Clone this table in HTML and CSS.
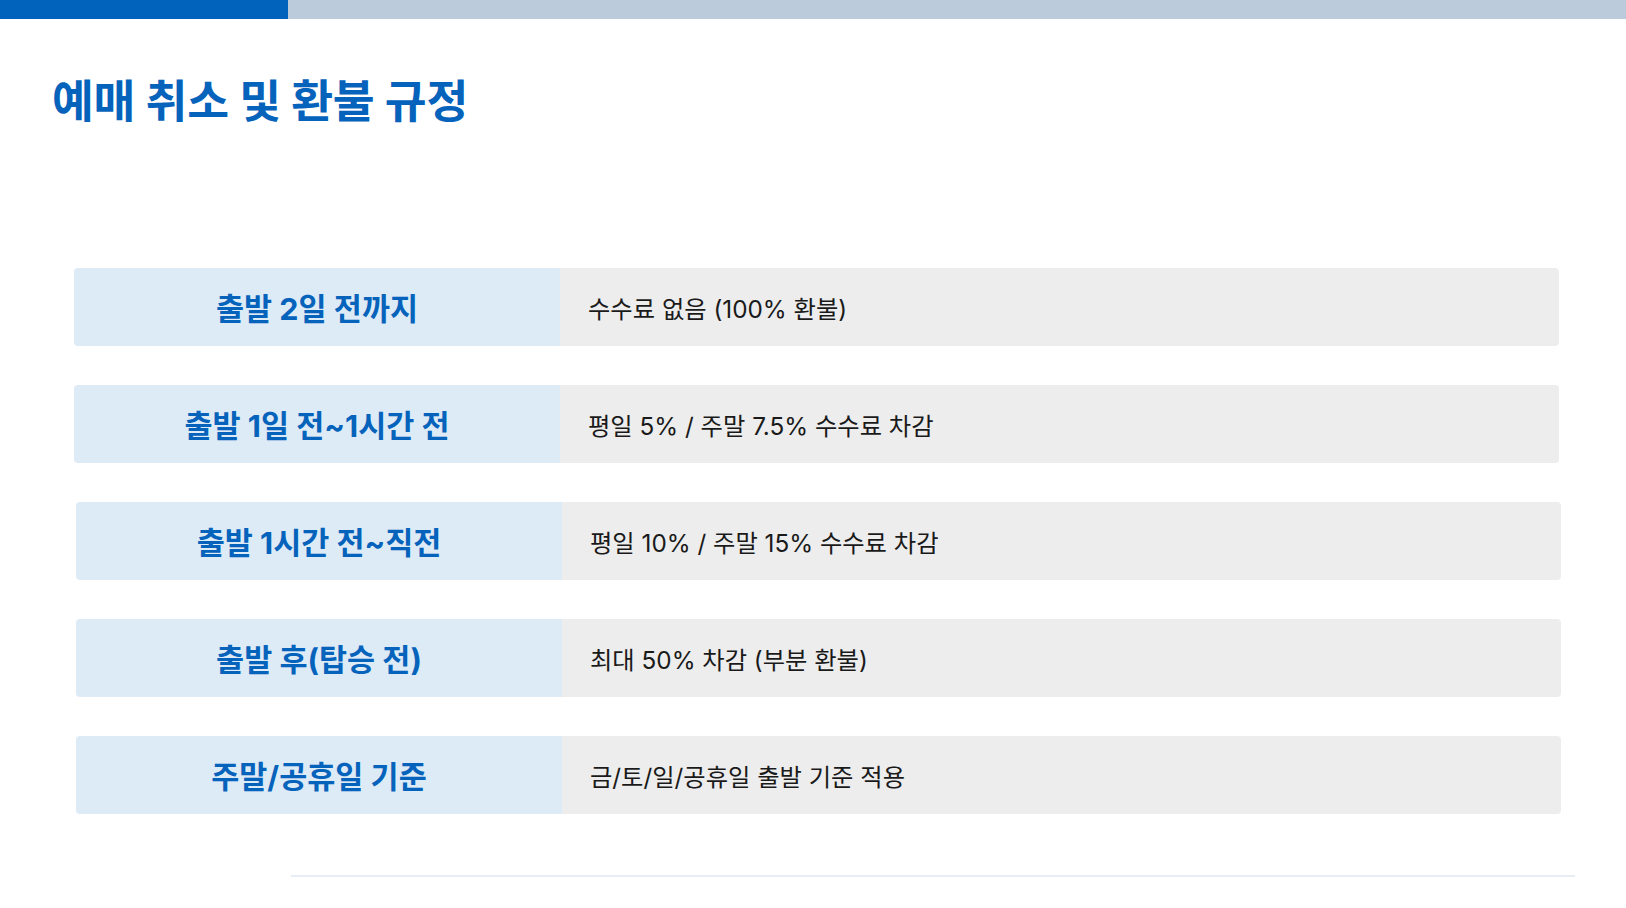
FILE: index.html
```html
<!DOCTYPE html>
<html lang="ko">
<head>
<meta charset="utf-8">
<link rel="stylesheet" href="styles.css">
</head>
<body>
<div class="topbar"><div class="topbar-accent"></div><div class="topbar-rest"></div></div>
<h1 class="title">예매 취소 및 환불 규정</h1>
<div class="rules">
  <div class="rule"><div class="rule-label">출발 2일 전까지</div><div class="rule-value">수수료 없음 (100% 환불)</div></div>
  <div class="rule"><div class="rule-label">출발 1일 전~1시간 전</div><div class="rule-value">평일 5% / 주말 7.5% 수수료 차감</div></div>
  <div class="rule rule-shift"><div class="rule-label">출발 1시간 전~직전</div><div class="rule-value">평일 10% / 주말 15% 수수료 차감</div></div>
  <div class="rule rule-shift"><div class="rule-label">출발 후(탑승 전)</div><div class="rule-value">최대 50% 차감 (부분 환불)</div></div>
  <div class="rule rule-shift"><div class="rule-label">주말/공휴일 기준</div><div class="rule-value">금/토/일/공휴일 출발 기준 적용</div></div>
</div>
<div class="divider"></div>
</body>
</html>
```

FILE: styles.css
```css
html, body {
  margin: 0;
  padding: 0;
  background: #ffffff;
  width: 1626px;
  height: 908px;
  overflow: hidden;
  font-family: "Inter", "Noto Sans CJK KR", "Noto Sans", sans-serif;
}
.topbar {
  display: flex;
  height: 19px;
}
.topbar-accent {
  width: 288px;
  background: #0163bb;
}
.topbar-rest {
  flex: 1;
  background: #bbcbdb;
}
.title {
  margin: 54px 0 0 52px;
  font-size: 45.5px;
  line-height: 58px;
  font-weight: 700;
  color: #0663bb;
  letter-spacing: -0.3px;
}
.rules {
  margin: 137px 0 0 74px;
  width: 1485px;
  display: flex;
  flex-direction: column;
  gap: 39px;
}
.rule {
  display: flex;
  height: 78px;
  border-radius: 4px;
  overflow: hidden;
}
.rule-shift {
  margin-left: 2px;
  margin-right: -2px;
}
.rule-label {
  width: 486px;
  flex: none;
  background: #ddebf7;
  color: #0663bb;
  font-size: 30.5px;
  font-weight: 700;
  display: flex;
  align-items: center;
  justify-content: center;
}
.rule-value {
  flex: 1;
  background: #ededed;
  color: #1a1a1a;
  font-size: 24.3px;
  display: flex;
  align-items: center;
  padding-left: 28px;
}
.divider {
  margin: 61px 0 0 291px;
  width: 1284px;
  height: 2px;
  background: #e6edf4;
}
```
